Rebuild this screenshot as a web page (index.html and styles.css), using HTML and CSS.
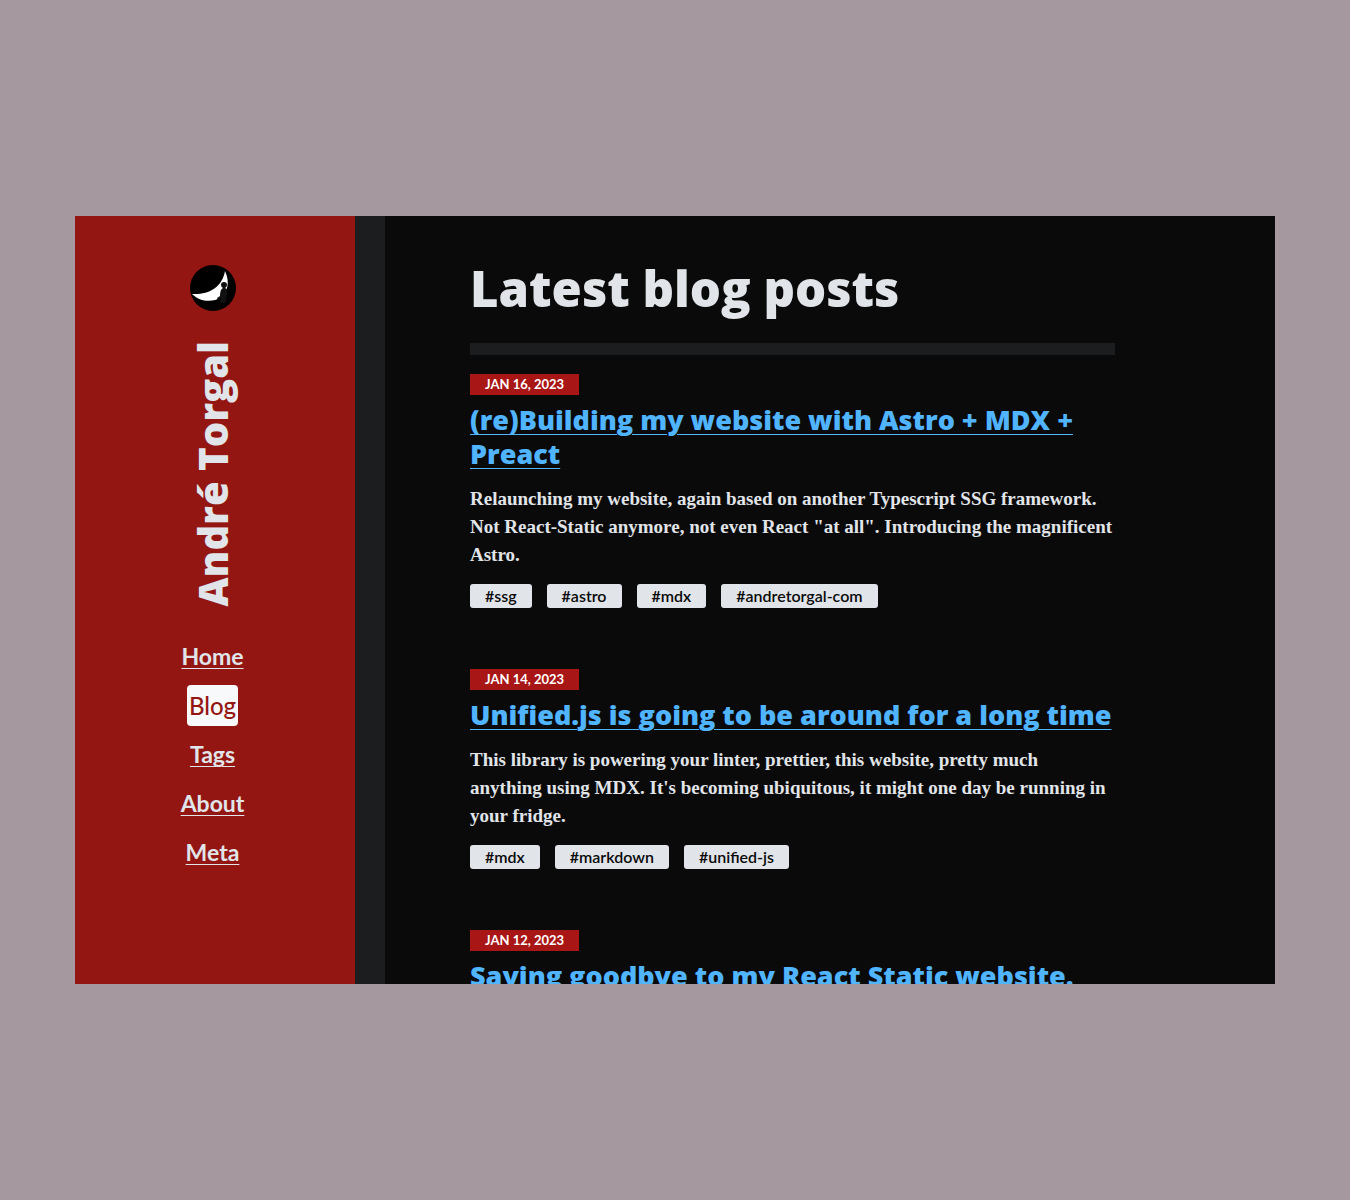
FILE: index.html
```html
<!DOCTYPE html>
<html lang="en">
<head>
<meta charset="utf-8">
<meta name="viewport" content="width=device-width, initial-scale=1">
<title>Latest blog posts - André Torgal</title>
<link rel="stylesheet" href="styles.css">
</head>
<body>
<div class="frame">
  <header class="sidebar">
    <svg class="logo" viewBox="0 0 46 46" aria-hidden="true">
      <circle cx="23" cy="23" r="23" fill="#000"/>
      <path d="M35 6C40 17 38 26 31 32C23 38 10 37 2 29C18 30 32 23 35 6Z" fill="#fff"/>
      <path d="M31 20Q31 17 34 17Q37 17 37 20Q37 22 35 23Q38 24 37 28L36 37Q33 39 30 37L31 33L28 35L27 33L30 31Q30 24 33 23Q31 22 31 20Z" fill="#111"/>
    </svg>
    <div class="brand">André Torgal</div>
    <nav class="nav">
      <a class="nav-link" href="#home">Home</a>
      <a class="nav-link nav-link-active" href="#blog" aria-current="page">Blog</a>
      <a class="nav-link" href="#tags">Tags</a>
      <a class="nav-link" href="#about">About</a>
      <a class="nav-link" href="#meta">Meta</a>
    </nav>
  </header>
  <main class="content">
    <h1 class="title">Latest blog posts</h1>
    <hr class="rule">
    <article class="post">
      <time class="date" datetime="2023-01-16">Jan 16, 2023</time>
      <h2 class="post-title"><a class="post-link" href="#astro">(re)Building my website with Astro + MDX + Preact</a></h2>
      <p class="summary">Relaunching my website, again based on another Typescript SSG framework. Not React-Static anymore, not even React "at all". Introducing the magnificent Astro.</p>
      <div class="tags"><a class="tag" href="#t">#ssg</a><a class="tag" href="#t">#astro</a><a class="tag" href="#t">#mdx</a><a class="tag" href="#t">#andretorgal-com</a></div>
    </article>
    <article class="post">
      <time class="date" datetime="2023-01-14">Jan 14, 2023</time>
      <h2 class="post-title"><a class="post-link" href="#unified">Unified.js is going to be around for a long time</a></h2>
      <p class="summary">This library is powering your linter, prettier, this website, pretty much anything using MDX. It's becoming ubiquitous, it might one day be running in your fridge.</p>
      <div class="tags"><a class="tag" href="#t">#mdx</a><a class="tag" href="#t">#markdown</a><a class="tag" href="#t">#unified-js</a></div>
    </article>
    <article class="post">
      <time class="date" datetime="2023-01-12">Jan 12, 2023</time>
      <h2 class="post-title"><a class="post-link" href="#react-static">Saying goodbye to my React Static website.</a></h2>
    </article>
  </main>
</div>
</body>
</html>
```
FILE: styles.css
```css
* { box-sizing: border-box; }
body {
  margin: 0;
  min-height: 100vh;
  padding: 18vh 75px;
  background: #a5989e;
  color: #e1e5e9;
  font-family: Lato, "Open Sans", sans-serif;
}
.frame {
  display: flex;
  height: 64vh;
  overflow: hidden;
  background: #0a0a0a;
}
.sidebar {
  display: flex;
  flex-direction: column;
  align-items: center;
  flex: 0 0 310px;
  padding: 49px 5px 0 0;
  background: #931613;
  border-right: 30px solid #1b1d1e;
}
.logo { width: 46px; height: 46px; }
.brand {
  margin: 30px 0;
  writing-mode: vertical-rl;
  transform: rotate(180deg);
  font-family: "Open Sans", sans-serif;
  font-size: 40px;
  line-height: 52px;
  font-weight: 800;
  white-space: nowrap;
}
.nav {
  display: flex;
  flex-direction: column;
  align-items: center;
  gap: 8px;
}
.nav-link {
  padding: 4px 2px;
  border-radius: 4px;
  color: #e1e5e9;
  font-size: 23px;
  line-height: 33px;
  font-weight: 700;
  text-decoration-thickness: 1px;
  text-underline-offset: 3px;
}
.nav-link-active {
  background: #f8f9fb;
  color: #931613;
  font-size: 24px;
  font-weight: 500;
  text-decoration: none;
}
.content {
  flex: 1;
  min-width: 0;
  padding: 40px 160px 0 85px;
}
.title {
  margin: 0 0 23px;
  font-family: "Open Sans", sans-serif;
  font-size: 49px;
  line-height: 64px;
  font-weight: 800;
}
.rule {
  height: 12px;
  margin: 0 0 19px;
  border: 0;
  background: #1b1d1e;
}
.post { margin-bottom: 61px; }
.date {
  display: block;
  width: fit-content;
  padding: 0 15px;
  background: #a81616;
  color: #fff;
  font-size: 13px;
  line-height: 21px;
  font-weight: 700;
  text-transform: uppercase;
}
.post-title {
  margin: 8px 0 14px;
  font-family: "Open Sans", sans-serif;
  font-size: 27px;
  line-height: 34px;
  font-weight: 800;
}
.post-link {
  color: #51b4ff;
  text-decoration-thickness: 1px;
  text-underline-offset: 4px;
}
.summary {
  margin: 0 0 15px;
  padding-right: 2px;
  font-family: "Liberation Serif", serif;
  font-size: 19px;
  line-height: 28px;
  font-weight: 700;
}
.tags { display: flex; flex-wrap: wrap; gap: 15px; }
.tag {
  padding: 0 15px;
  border-radius: 3px;
  background: #e1e5e9;
  color: #0a0a0a;
  font-size: 16px;
  line-height: 24px;
  font-weight: 600;
  text-decoration: none;
}
```
